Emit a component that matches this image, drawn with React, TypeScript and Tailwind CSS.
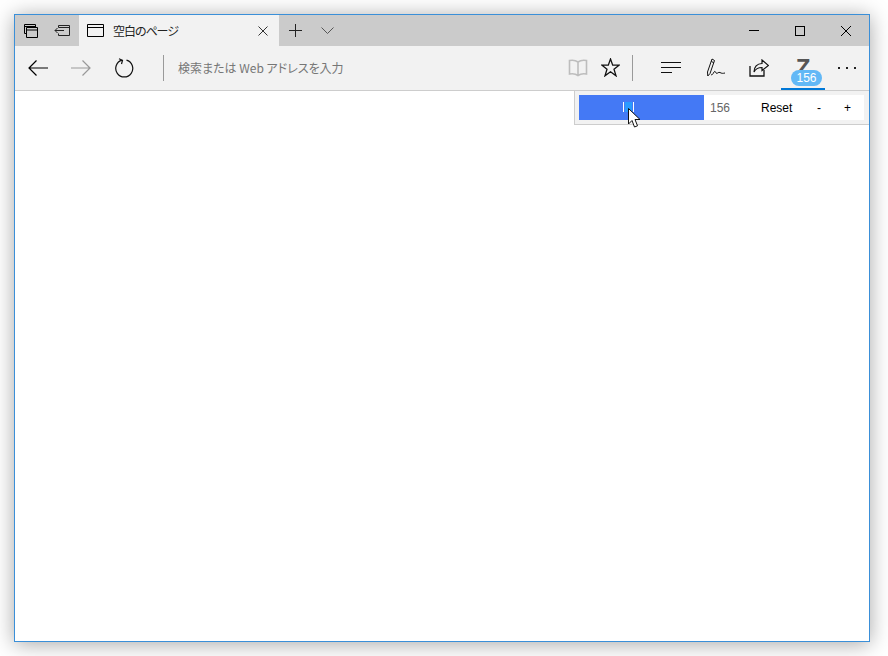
function Icon({ w, h, children, className }: { w: number; h: number; children: React.ReactNode; className?: string }) {
  return (
    <svg width={w} height={h} viewBox={`0 0 ${w} ${h}`} fill="none" stroke="currentColor" strokeWidth="1" className={className}>
      {children}
    </svg>
  );
}

function TitleBar() {
  return (
    <div className="flex h-[31px] bg-[#cbcbcb] text-black">
      {/* Tab tools */}
      <div className="flex w-[64px] items-center">
        <div className="ml-[9px] w-[14px]">
          <Icon w={14} h={14}>
            <path d="M2.5 9.5H.5V.5H11.5V3.5M.5 2.5H11.5" />
            <path d="M2.5 3.5H13.5V13.5H2.5ZM2.5 6H13.5" strokeWidth="1" />
          </Icon>
        </div>
        <div className="ml-[16px]">
          <Icon w={16} h={12} className="text-[#222]">
            <path d="M4.5 2.5V.5H15.5V10.5H4.5V8.5M4.5 2.5H15.5" />
            <path d="M10 5.5H1M3.5 3L1 5.5L3.5 8" />
          </Icon>
        </div>
      </div>

      {/* Active tab */}
      <div className="flex w-[200px] items-center bg-[#f2f2f2]">
        <div className="ml-[8px] flex">
          <Icon w={17} h={14}>
            <path d="M.5 .5H16.5V12.5H.5ZM.5 3.5H16.5" />
          </Icon>
        </div>
        <span className="ml-[9px] flex-1 font-['Noto_Sans_CJK_JP',sans-serif] text-[12px] leading-none tracking-[-1.1px] text-[#222]">空白のページ</span>
        <div className="mr-[11px] flex">
          <Icon w={10} h={10} className="text-[#333]">
            <path d="M.5 .5L9.5 9.5M9.5 .5L.5 9.5" />
          </Icon>
        </div>
      </div>

      {/* New tab, tab preview */}
      <div className="ml-[10px] flex items-center">
        <Icon w={13} h={13} className="text-[#222]">
          <path d="M6.5 0V13M0 6.5H13" />
        </Icon>
        <div className="ml-[19px]">
          <Icon w={13} h={7} className="text-[#555]">
            <path d="M.5 .5L6.5 6.5L12.5 .5" />
          </Icon>
        </div>
      </div>

      {/* Window controls */}
      <div className="ml-auto flex items-center">
        <Icon w={10} h={1} className="mr-[36px]">
          <path d="M0 .5H10" />
        </Icon>
        <Icon w={10} h={10} className="mr-[36px]">
          <rect x=".5" y=".5" width="9" height="9" />
        </Icon>
        <Icon w={10} h={10} className="mr-[18px]">
          <path d="M0 0L10 10M10 0L0 10" />
        </Icon>
      </div>
    </div>
  );
}

function ToolBar() {
  return (
    <div className="flex h-[45px] items-center border-b border-[#cdcdcd] bg-[#f2f2f2] pb-[1px]">
      <div className="ml-[13px] flex w-[20px]">
        <Icon w={20} h={16} className="text-[#000]">
          <path d="M20 8H1M8.500 .5L1 8L8.500 15.500" strokeWidth="1.200" />
        </Icon>
      </div>
      <div className="ml-[23px] flex w-[20px]">
        <Icon w={20} h={16} className="text-[#999]">
          <path d="M0 8H19M11.500 .5L19 8L11.500 15.500" strokeWidth="1.200" />
        </Icon>
      </div>
      <div className="ml-[23px] flex w-[20px]">
        <Icon w={20} h={20} className="text-[#111]">
          <path d="M8 2.200A8.500 8.500 0 1 0 12.500 2.200M5 .8L8.500 2.300L7.500 6" strokeWidth="1.200" />
        </Icon>
      </div>
      <div className="ml-[29px] h-[26px] w-px bg-[#9a9a9a]" />
      <span className="ml-[14px] font-['Noto_Sans_CJK_JP',sans-serif] text-[12px] leading-none text-[#767676] [font-feature-settings:'palt']">検索または Web アドレスを入力</span>

      <div className="ml-auto flex items-center">
        <Icon w={20} h={18} className="text-[#bdbdbd]">
          <path d="M10 3C8 1.500 4 1 1.500 1.500V15C4 14.500 8 15 10 16.500C12 15 16 14.500 18.500 15V1.500C16 1 12 1.500 10 3ZM10 3V16.500" strokeWidth="1.600" />
        </Icon>
        <div className="ml-[13px] flex">
          <Icon w={19} h={19} className="text-[#111]">
            <path d="M9.500 1L11.700 7.200H18L13 11.200L15 17.800L9.500 13.800L4 17.800L6 11.200L1 7.200H7.300Z" strokeWidth="1.300" />
          </Icon>
        </div>
        <div className="ml-[12px] h-[26px] w-px bg-[#9a9a9a]" />
        <div className="ml-[28px] flex">
          <Icon w={20} h={13} className="text-[#111]">
            <path d="M0 1.500H20M0 6.500H20M0 11.500H11" />
          </Icon>
        </div>
        <div className="ml-[25px] flex">
          <Icon w={20} h={20} className="text-[#111]">
            <path d="M6 1L8.500 2.500L4 15.500L1.800 18L1.500 14ZM5.300 3.400L7.800 4.800" />
            <path d="M5 16.500C6 17.500 7 16 8 14C9 12.500 9.500 14 10 15C11 16.500 12.500 13.500 14 14.500C15.500 15.500 17 15.500 19 15" />
          </Icon>
        </div>
        <div className="ml-[23px] flex">
          <Icon w={20} h={18} className="text-[#111]">
            <path d="M1 7V17H15V11" strokeWidth="1.300" />
            <path d="M13 1L19.500 6.500L13 11.500V8.500C9 8.500 6.500 10 5 13C5 8 8 4.500 13 4.500Z" strokeWidth="1.200" />
          </Icon>
        </div>
        {/* Extension button with counter badge */}
        <div className="relative ml-[12px] flex h-[44px] w-[44px] justify-center border-b-[2px] border-[#0078d7]">
          <span className="mt-[7px] font-['Liberation_Sans',sans-serif] text-[24px] leading-[30px] font-bold text-[#555]">Z</span>
          <span className="absolute top-[24px] left-[10px] flex h-[16px] w-[31px] items-center justify-center rounded-full bg-[#62b8f6] font-['Liberation_Sans',sans-serif] text-[12px] leading-none text-white">156</span>
        </div>
        <div className="mr-[13px] ml-[13px] flex gap-[6px]">
          <span className="h-[2px] w-[2px] bg-[#222]" />
          <span className="h-[2px] w-[2px] bg-[#222]" />
          <span className="h-[2px] w-[2px] bg-[#222]" />
        </div>
      </div>
    </div>
  );
}

function ZoomPopup() {
  return (
    <div className="absolute top-0 right-0 w-[295px] border-b border-l border-[#cdcdcd] bg-[#f2f2f2] py-[4px] pr-[5px] pl-[4px]">
      <div className="flex h-[25px] items-center bg-white font-['Liberation_Sans',sans-serif] text-[12px] leading-none">
        <div className="h-full w-[125px] bg-[#4479f5] pt-[7px] pl-[44px]">
          <div className="flex h-[10px] w-[11px] border-x border-white">
            <div className="ml-[1px] w-[7px] bg-[#2a9bff]" />
          </div>
        </div>
        <span className="ml-[6px] w-[51px] text-[#666]">156</span>
        <span className="w-[56px] text-black">Reset</span>
        <span className="w-[27px] text-black">-</span>
        <span className="text-black">+</span>
      </div>
      {/* Mouse cursor */}
      <svg width="14" height="22" viewBox="0 0 14 22" className="absolute top-[17px] left-[53px]">
        <path d="M.5 .5V16L4 12.500L6.500 19L9.500 17.800L7 11.500H12Z" fill="#fff" stroke="#111" strokeWidth="1" />
      </svg>
    </div>
  );
}

export default function App() {
  return (
    <div className="h-[656px] w-[888px] overflow-hidden bg-white p-[14px] pr-[18px]">
      <div className="flex h-[628px] w-[856px] flex-col border border-[#3a8fd8] bg-white shadow-[0_2px_20px_rgba(0,0,0,0.35)]">
        <TitleBar />
        <ToolBar />
        <div className="relative flex-1 bg-white">
          <ZoomPopup />
        </div>
      </div>
    </div>
  );
}
